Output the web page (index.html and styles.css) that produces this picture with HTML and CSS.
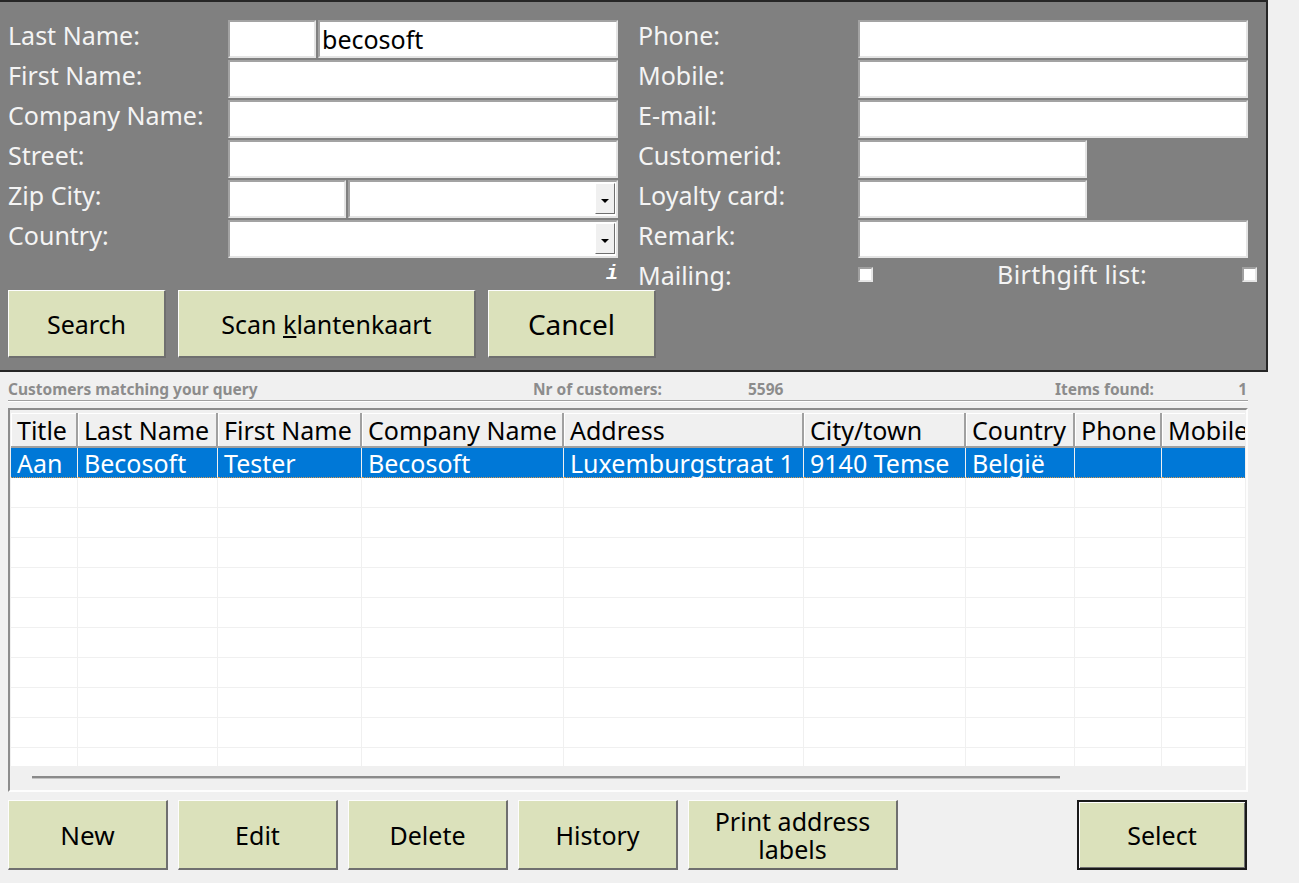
FILE: index.html
```html
<!DOCTYPE html>
<html lang="en">
<head>
    <meta charset="UTF-8">
    <meta name="viewport" content="width=device-width, initial-scale=1.0">
    <title>Customers</title>
    <link rel="stylesheet" href="styles.css">
</head>
<body>
    <div class="search-panel">
        <div class="search-fields">
            <div class="field-group">
                <label class="field-label">Last Name:</label>
                <div class="field-split">
                    <input type="text" class="field title-box">
                    <input type="text" class="field field-grow" value="becosoft">
                </div>

                <label class="field-label">First Name:</label>
                <input type="text" class="field">

                <label class="field-label">Company Name:</label>
                <input type="text" class="field">

                <label class="field-label">Street:</label>
                <input type="text" class="field">

                <label class="field-label">Zip City:</label>
                <div class="field-split">
                    <input type="text" class="field zip-box">
                    <div class="field combo field-grow"><span class="combo-btn"></span></div>
                </div>

                <label class="field-label">Country:</label>
                <div class="field combo"><span class="combo-btn"></span></div>

                <span></span>
                <span class="info-mark">i</span>
            </div>

            <div class="field-group">
                <label class="field-label">Phone:</label>
                <input type="text" class="field">

                <label class="field-label">Mobile:</label>
                <input type="text" class="field">

                <label class="field-label">E-mail:</label>
                <input type="text" class="field">

                <label class="field-label">Customerid:</label>
                <input type="text" class="field field-short">

                <label class="field-label">Loyalty card:</label>
                <input type="text" class="field field-short">

                <label class="field-label">Remark:</label>
                <input type="text" class="field">

                <label class="field-label check-title">Mailing:</label>
                <div class="check-row">
                    <span class="checkbox"></span>
                    <span class="check-label">Birthgift list:</span>
                    <span class="checkbox checkbox-end"></span>
                </div>
            </div>
        </div>

        <div class="panel-buttons">
            <button class="btn btn-search">Search</button>
            <button class="btn btn-scan">Scan <u>k</u>lantenkaart</button>
            <button class="btn btn-cancel">Cancel</button>
        </div>
    </div>

    <div class="results">
        <div class="info-bar">
            <span>Customers matching your query</span>
            <span>Nr of customers:</span>
            <span>5596</span>
            <span class="info-found"><span>Items found:</span><span>1</span></span>
        </div>

        <div class="grid-frame">
            <div class="grid-view">
                <table class="grid">
                    <thead>
                        <tr>
                            <th class="col-title">Title</th>
                            <th class="col-last">Last Name</th>
                            <th class="col-first">First Name</th>
                            <th class="col-company">Company Name</th>
                            <th class="col-address">Address</th>
                            <th class="col-city">City/town</th>
                            <th class="col-country">Country</th>
                            <th class="col-phone">Phone</th>
                            <th class="col-mobile">Mobile</th>
                        </tr>
                    </thead>
                    <tbody>
                        <tr class="selected">
                            <td>Aan</td>
                            <td>Becosoft</td>
                            <td>Tester</td>
                            <td>Becosoft</td>
                            <td>Luxemburgstraat 1</td>
                            <td>9140 Temse</td>
                            <td>België</td>
                            <td></td>
                            <td></td>
                        </tr>
                        <tr><td></td><td></td><td></td><td></td><td></td><td></td><td></td><td></td><td></td></tr>
                        <tr><td></td><td></td><td></td><td></td><td></td><td></td><td></td><td></td><td></td></tr>
                        <tr><td></td><td></td><td></td><td></td><td></td><td></td><td></td><td></td><td></td></tr>
                        <tr><td></td><td></td><td></td><td></td><td></td><td></td><td></td><td></td><td></td></tr>
                        <tr><td></td><td></td><td></td><td></td><td></td><td></td><td></td><td></td><td></td></tr>
                        <tr><td></td><td></td><td></td><td></td><td></td><td></td><td></td><td></td><td></td></tr>
                        <tr><td></td><td></td><td></td><td></td><td></td><td></td><td></td><td></td><td></td></tr>
                        <tr><td></td><td></td><td></td><td></td><td></td><td></td><td></td><td></td><td></td></tr>
                        <tr><td></td><td></td><td></td><td></td><td></td><td></td><td></td><td></td><td></td></tr>
                        <tr><td></td><td></td><td></td><td></td><td></td><td></td><td></td><td></td><td></td></tr>
                        <tr><td></td><td></td><td></td><td></td><td></td><td></td><td></td><td></td><td></td></tr>
                    </tbody>
                </table>
            </div>
            <div class="hscroll"><div class="hscroll-thumb"></div></div>
        </div>

        <div class="action-buttons">
            <button class="btn btn-action btn-new">New</button>
            <button class="btn btn-action">Edit</button>
            <button class="btn btn-action">Delete</button>
            <button class="btn btn-action">History</button>
            <button class="btn btn-action btn-print">Print address<br>labels</button>
            <button class="btn btn-action btn-select">Select</button>
        </div>
    </div>
</body>
</html>
```

FILE: styles.css
```css
body {
    margin: 0;
    background-color: #f0f0f0;
    font-family: "Noto Sans", "DejaVu Sans", sans-serif;
    font-size: 25px;
    line-height: 1.2;
}

/* Zoekpaneel */
.search-panel {
    width: 1268px;
    box-sizing: border-box;
    background-color: #808080;
    border-top: 2px solid #262626;
    border-right: 2px solid #262626;
    border-bottom: 2px solid #262626;
    padding: 18px 0 12px 8px;
}

.search-fields {
    display: flex;
    gap: 20px;
}

.field-group {
    display: grid;
    grid-template-columns: 220px 390px;
    grid-template-rows: repeat(6, 38px) 28px;
    row-gap: 2px;
}

.field-label {
    color: #f4f4f4;
    line-height: 31px;
    white-space: nowrap;
}

.field {
    box-sizing: border-box;
    width: 100%;
    height: 38px;
    margin: 0;
    padding: 0 2px;
    background-color: #fff;
    border: 2px solid;
    border-color: #a3a3a3 #e4e4e4 #e4e4e4 #a3a3a3;
    font-family: inherit;
    font-size: 25px;
    color: #000;
    outline: none;
}

.field-split {
    display: flex;
    gap: 2px;
}

.title-box {
    width: 88px;
    flex: none;
}

.zip-box {
    width: 118px;
    flex: none;
}

.field-grow {
    flex: 1;
    min-width: 0;
}

.field-short {
    width: 229px;
}

.combo {
    display: flex;
    justify-content: flex-end;
    padding: 1px 1px 2px 0;
}

.combo-btn {
    width: 20px;
    box-sizing: border-box;
    background-color: #f0f0f0;
    border: 1px solid;
    border-color: #fff #6f6f6f #6f6f6f #fff;
    display: flex;
    align-items: flex-end;
    justify-content: center;
    padding-bottom: 10px;
}

.combo-btn::after {
    content: "";
    border-left: 4px solid transparent;
    border-right: 4px solid transparent;
    border-top: 4px solid #000;
}

.info-mark {
    justify-self: end;
    font-family: "Liberation Mono", monospace;
    font-style: italic;
    font-weight: bold;
    font-size: 20px;
    line-height: 28px;
    color: #fff;
}

.check-title {
    line-height: 30px;
}

.check-row {
    display: flex;
    align-items: center;
    width: 399px;
}

.checkbox {
    width: 15px;
    height: 15px;
    box-sizing: border-box;
    background-color: #fff;
    border: 2px solid;
    border-color: #a0a0a0 #e6e6e6 #e6e6e6 #a0a0a0;
    flex: none;
}

.check-label {
    margin-left: 124px;
    color: #f4f4f4;
    letter-spacing: 0.4px;
    white-space: nowrap;
}

.checkbox-end {
    margin-left: auto;
}

/* Knoppen */
.panel-buttons {
    display: flex;
    gap: 12px;
    margin-top: 2px;
}

.btn {
    height: 68px;
    box-sizing: border-box;
    padding: 0;
    background-color: #dbe1bb;
    border-style: solid;
    border-width: 1px 2px 2px 1px;
    border-color: #fdfdfd #6f6f6f #6f6f6f #fdfdfd;
    font-family: inherit;
    font-size: 25px;
    line-height: 28px;
    color: #000;
    cursor: pointer;
}

.btn-search {
    width: 158px;
}

.btn-scan {
    width: 298px;
}

.btn-cancel {
    width: 168px;
    font-size: 28px;
}

/* Resultaten */
.results {
    margin: 6px 0 0 8px;
    width: 1240px;
}

.info-bar {
    display: grid;
    grid-template-columns: 525px 215px 307px 1fr;
    align-items: center;
    height: 22px;
    border-bottom: 1px solid #a0a0a0;
    box-shadow: 0 1px 0 #fff;
    font-size: 15.5px;
    font-weight: bold;
    color: #8c8c8c;
    white-space: nowrap;
}

.info-found {
    display: flex;
    justify-content: space-between;
    padding-right: 1px;
}

.grid-frame {
    margin-top: 7px;
    height: 384px;
    box-sizing: border-box;
    border: 2px solid;
    border-color: #8c8c8c #fdfdfd #fdfdfd #8c8c8c;
    padding: 3px 1px 1px 1px;
    background-color: #f0f0f0;
    display: flex;
    flex-direction: column;
}

.grid-view {
    height: 353px;
    overflow: hidden;
    background-color: #fff;
    flex: none;
}

.grid {
    border-collapse: separate;
    border-spacing: 0;
    table-layout: fixed;
    width: 1251px;
}

.grid th {
    box-sizing: border-box;
    height: 35px;
    padding: 2px 6px 0;
    background-color: #f0f0f0;
    border-right: 2px solid #a0a0a0;
    border-bottom: 2px solid #a0a0a0;
    box-shadow: inset 1px 1px 0 #fff;
    font-weight: normal;
    text-align: left;
    line-height: 31px;
    white-space: nowrap;
}

.grid td {
    box-sizing: border-box;
    height: 30px;
    padding: 1px 6px 0;
    border-right: 1px solid #f0f0f0;
    border-bottom: 1px solid #f0f0f0;
    line-height: 28px;
    white-space: nowrap;
}

.grid tr.selected td {
    background-color: #0078d7;
    color: #fff;
    border-bottom: 1px dotted #d99a4e;
}

.col-title { width: 67px; }
.col-last { width: 140px; }
.col-first { width: 144px; }
.col-company { width: 202px; }
.col-address { width: 240px; }
.col-city { width: 162px; }
.col-country { width: 109px; }
.col-phone { width: 87px; }
.col-mobile { width: 100px; }

.hscroll {
    flex: 1;
    display: flex;
    align-items: center;
    padding-left: 21px;
}

.hscroll-thumb {
    width: 1028px;
    height: 2px;
    background-color: #8a8a8a;
    border-bottom: 1px solid #c4c4c4;
}

.action-buttons {
    display: flex;
    gap: 10px;
    margin-top: 8px;
    width: 1239px;
}

.btn-action {
    width: 160px;
    height: 70px;
}

.btn-new {
    font-size: 26px;
}

.btn-print {
    width: 210px;
}

.btn-select {
    margin-left: auto;
    width: 170px;
    border: 2px solid #1a1a1a;
    box-shadow: inset 1px 1px 0 #fff, inset -1px -1px 0 #6f6f6f;
}
```
